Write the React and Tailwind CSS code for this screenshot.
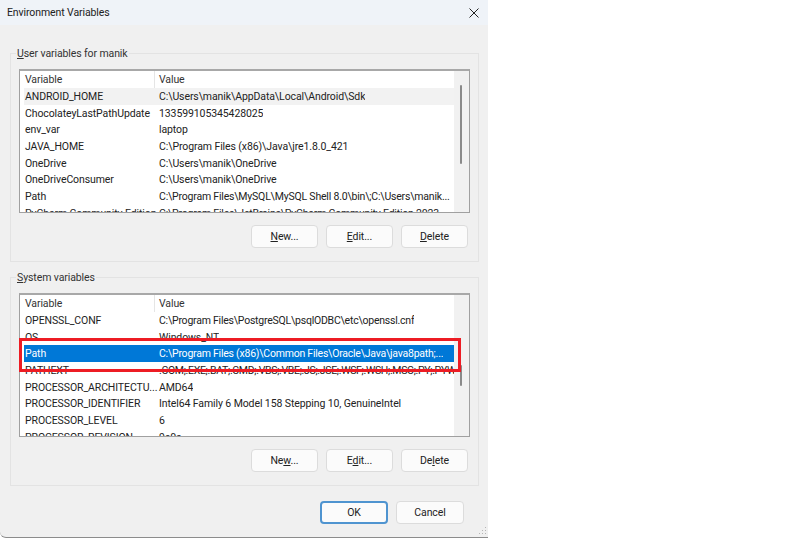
const userVars = [
  ['ANDROID_HOME', 'C:\\Users\\manik\\AppData\\Local\\Android\\Sdk'],
  ['ChocolateyLastPathUpdate', '133599105345428025'],
  ['env_var', 'laptop'],
  ['JAVA_HOME', 'C:\\Program Files (x86)\\Java\\jre1.8.0_421'],
  ['OneDrive', 'C:\\Users\\manik\\OneDrive'],
  ['OneDriveConsumer', 'C:\\Users\\manik\\OneDrive'],
  ['Path', 'C:\\Program Files\\MySQL\\MySQL Shell 8.0\\bin\\;C:\\Users\\manik...', 'tracking-[-0.2px]'],
  ['PyCharm Community Edition', 'C:\\Program Files\\JetBrains\\PyCharm Community Edition 2023', 'tracking-[-0.2px]'],
]

const systemVars = [
  ['OPENSSL_CONF', 'C:\\Program Files\\PostgreSQL\\psqlODBC\\etc\\openssl.cnf', 'tracking-[-0.23px]'],
  ['OS', 'Windows_NT'],
  ['Path', 'C:\\Program Files (x86)\\Common Files\\Oracle\\Java\\java8path;...', 'tracking-[-0.23px]'],
  ['PATHEXT', '.COM;.EXE;.BAT;.CMD;.VBS;.VBE;.JS;.JSE;.WSF;.WSH;.MSC;.PY;.PYW', 'tracking-[-0.32px]'],
  ['PROCESSOR_ARCHITECTU...', 'AMD64'],
  ['PROCESSOR_IDENTIFIER', 'Intel64 Family 6 Model 158 Stepping 10, GenuineIntel'],
  ['PROCESSOR_LEVEL', '6'],
  ['PROCESSOR_REVISION', '9e0a'],
]

function Btn({ label, u, primary, className = '' }) {
  // u = index of the underlined access key
  return (
    <button
      className={`h-[23px] rounded-[4px] bg-[#fbfbfb] text-[10.5px] tracking-[-0.1px] text-[#222] ${
        primary ? 'border-2 border-[#4f94d0]' : 'border border-[#dcdcdc]'
      } ${className}`}
    >
      {u === undefined ? (
        label
      ) : (
        <>
          {label.slice(0, u)}
          <span className="underline">{label[u]}</span>
          {label.slice(u + 1)}
        </>
      )}
    </button>
  )
}

function VarList({ rows, selected, thumbTop, thumbHeight }) {
  return (
    <div className="relative mx-[8px] mt-[8px] h-[144px] overflow-hidden border border-t-2 border-[#a0a0a0] border-t-[#a8a8a8] bg-white">
      <div className="flex h-[17px] items-center text-[10.5px] tracking-[-0.1px] text-[#333]">
        <div className="w-[134px] pl-[5px] pt-px">Variable</div>
        <div className="h-full w-px bg-[#e5e5e5]" />
        <div className="pl-[4px] pt-px">Value</div>
      </div>
      <div className="pl-[4px] pr-[15px]">
        {rows.map(([name, value, fit], i) => (
          <div
            key={name}
            className={`flex h-[16.7px] items-center whitespace-nowrap pt-px text-[10.5px] tracking-[-0.1px] ${
              i === selected
                ? 'bg-[#0078d7] text-white'
                : i === 0 && selected === undefined
                  ? 'bg-[#f2f2f2] text-[#222]'
                  : 'text-[#222]'
            }`}
          >
            <div className="w-[134px] shrink-0 overflow-hidden pl-px">{name}</div>
            <div className={`overflow-hidden pl-[1px] ${fit || ''}`}>{value}</div>
          </div>
        ))}
      </div>
      <div className="absolute bottom-0 right-0 top-0 w-[15px] bg-[#f1f1f1]">
        <div
          className="absolute left-[6px] w-[2px] rounded-full bg-[#8a8a8a]"
          style={{ top: thumbTop, height: thumbHeight }}
        />
      </div>
    </div>
  )
}

function Group({ title, u, children, className = '' }) {
  return (
    <fieldset className={`mx-[10px] h-[216px] w-[469px] min-w-0 border border-[#e3e3e3] ${className}`}>
      <legend className="ml-[5px] px-px pt-px text-[10.5px] tracking-[-0.1px] leading-[14px] text-[#333]">
        <span className="underline">{title[u]}</span>
        {title.slice(u + 1)}
      </legend>
      {children}
    </fieldset>
  )
}

export default function App() {
  return (
    <div className="h-[538px] w-[800px] overflow-hidden bg-white font-['Roboto','Liberation_Sans',sans-serif]">
      <div className="relative h-[538px] w-[488px] rounded-bl-[6px] border-b border-[#8c8c8c] bg-[#f0f0f0]">
        <div className="flex h-[25px] items-center justify-between bg-[#eff3f8] pl-[7px] pr-[9px] pt-px text-[10.5px] tracking-[-0.1px] text-[#222]">
          <span>Environment Variables</span>
          <svg width="10" height="10" viewBox="0 0 10 10" className="stroke-[#222]">
            <path d="M0.5 0.5 9.5 9.5M9.5 0.5 0.5 9.5" strokeWidth="1" fill="none" />
          </svg>
        </div>

        <Group title="User variables for manik" u={0} className="mt-[21px]">
          <VarList rows={userVars} thumbTop={14} thumbHeight={79} />
          <div className="mt-[12px] flex justify-end gap-[8px] pr-[10px]">
            <Btn label="New..." u={0} className="w-[67px]" />
            <Btn label="Edit..." u={0} className="w-[67px]" />
            <Btn label="Delete" u={0} className="w-[67px]" />
          </div>
        </Group>

        <Group title="System variables" u={0} className="mt-[8px]">
          <VarList rows={systemVars} selected={2} thumbTop={70} thumbHeight={21} />
          <div className="mt-[12px] flex justify-end gap-[8px] pr-[10px]">
            <Btn label="New..." u={2} className="w-[67px]" />
            <Btn label="Edit..." u={1} className="w-[67px]" />
            <Btn label="Delete" u={2} className="w-[67px]" />
          </div>
        </Group>

        <div className="mt-[15px] flex justify-end gap-[8px] pr-[24px]">
          <Btn label="OK" primary className="w-[68px]" />
          <Btn label="Cancel" className="w-[68px]" />
        </div>

        {/* grip */}
        <svg width="8" height="8" viewBox="0 0 8 8" className="absolute bottom-[2px] right-[1px] fill-[#b5b5b5]">
          <rect x="6" y="0" width="1" height="1" />
          <rect x="3" y="3" width="1" height="1" />
          <rect x="6" y="3" width="1" height="1" />
          <rect x="0" y="6" width="1" height="1" />
          <rect x="3" y="6" width="1" height="1" />
          <rect x="6" y="6" width="1" height="1" />
        </svg>

        {/* red annotation box */}
        <div className="absolute left-[19px] top-[338px] h-[34px] w-[442px] border-[3px] border-[#ed1c24]" />
      </div>
    </div>
  )
}
